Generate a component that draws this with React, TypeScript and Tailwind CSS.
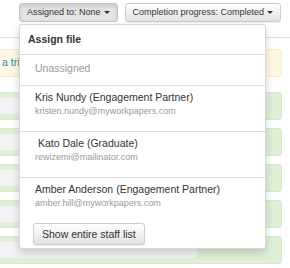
import React from "react";

const staff = [
    {name: "Kris Nundy (Engagement Partner)", email: "kristen.nundy@myworkpapers.com"},
    {name: " Kato Dale (Graduate)", email: "rewizemi@mailinator.com"},
    {name: "Amber Anderson (Engagement Partner)", email: "amber.hill@myworkpapers.com"},
];

const Caret = () => (
    <span className="inline-block w-0 h-0 border-t-[3px] border-t-[#333] border-x-[3px] border-x-transparent"/>
);

const ToolbarButton = ({label, active}: { label: string; active?: boolean }) => (
    <button
        className={active
            ? "flex items-center gap-[3px] h-[19px] px-[7px] rounded-[3px] border border-[#c4c4c4] bg-[#e3e3e3] shadow-[inset_0_2px_4px_rgba(0,0,0,0.12)] text-[9px] leading-none text-[#333]"
            : "flex items-center gap-[3px] h-[19px] px-[7px] rounded-[3px] border border-[#ccc] bg-linear-to-b from-white to-[#e2e2e2] shadow-[0_1px_1px_rgba(0,0,0,0.07)] text-[9px] leading-none text-[#333]"}
    >
        <span>{label}</span>
        <Caret/>
    </button>
);

export default function App() {
    return (
        <div className="relative w-[290px] h-[268px] overflow-hidden bg-white font-['Liberation_Sans',Arial,sans-serif] text-[#333]">
            {/*toolbar*/}
            <div className="flex gap-[7px] pl-[19px] pt-[3px]">
                <ToolbarButton label="Assigned to: None" active/>
                <ToolbarButton label="Completion progress: Completed"/>
            </div>
            <div className="h-[16px] border-b border-[#ddd]"/>

            {/*page content behind the menu*/}
            <div className="-ml-[6px] mr-[8px]">
                <div className="mt-[11px] h-[28px] flex items-center pl-[7px] rounded-[3px] border border-[#faebcc] bg-[#fcf8e3] text-[10.5px] text-[#3a87ad]">
                    a trial
                </div>
                <div className="mt-[15px] flex flex-col gap-[8px]">
                    {[0, 1, 2, 3, 4].map(i => (
                        <div key={i} className="h-[28px] pt-[5px] rounded-[3px] border border-[#d6e9c6] bg-[#dff0d8]">
                            <div className="h-[16px] w-[202px] rounded-r-[3px] bg-[#f4f4f4]"/>
                        </div>
                    ))}
                </div>
            </div>

            {/*assign dropdown*/}
            <div className="absolute left-[19px] top-[24px] w-[247px] rounded-[3px] border border-black/15 bg-white shadow-[0_4px_9px_rgba(0,0,0,0.175)]">
                <div className="pl-[8px] pt-[7px] pb-[8px] text-[10.5px] leading-[14px] font-bold text-[#333] border-b border-[#ddd]">
                    Assign file
                </div>
                <div className="pl-[15px] pt-[6px] pb-[10px] text-[10.5px] leading-[14px] text-[#999] border-b border-[#ddd]">
                    Unassigned
                </div>
                {staff.map((s, idx) => (
                    <div key={idx}
                         className={`pl-[15px] pt-[4px] ${idx < staff.length - 1 ? "pb-[13px] border-b border-[#ddd]" : ""}`}>
                        <p className="text-[10.5px] leading-[14px] text-[#333] whitespace-pre">{s.name}</p>
                        <p className="text-[9px] leading-[14px] text-[#999]">{s.email}</p>
                    </div>
                ))}
                <div className="pl-[13px] pt-[11px] pb-[3px]">
                    <button className="h-[22px] px-[8px] rounded-[3px] border border-[#ccc] bg-linear-to-b from-white to-[#e2e2e2] shadow-[0_1px_1px_rgba(0,0,0,0.07)] text-[10.5px] leading-none text-[#333]">
                        Show entire staff list
                    </button>
                </div>
            </div>
        </div>
    );
}
